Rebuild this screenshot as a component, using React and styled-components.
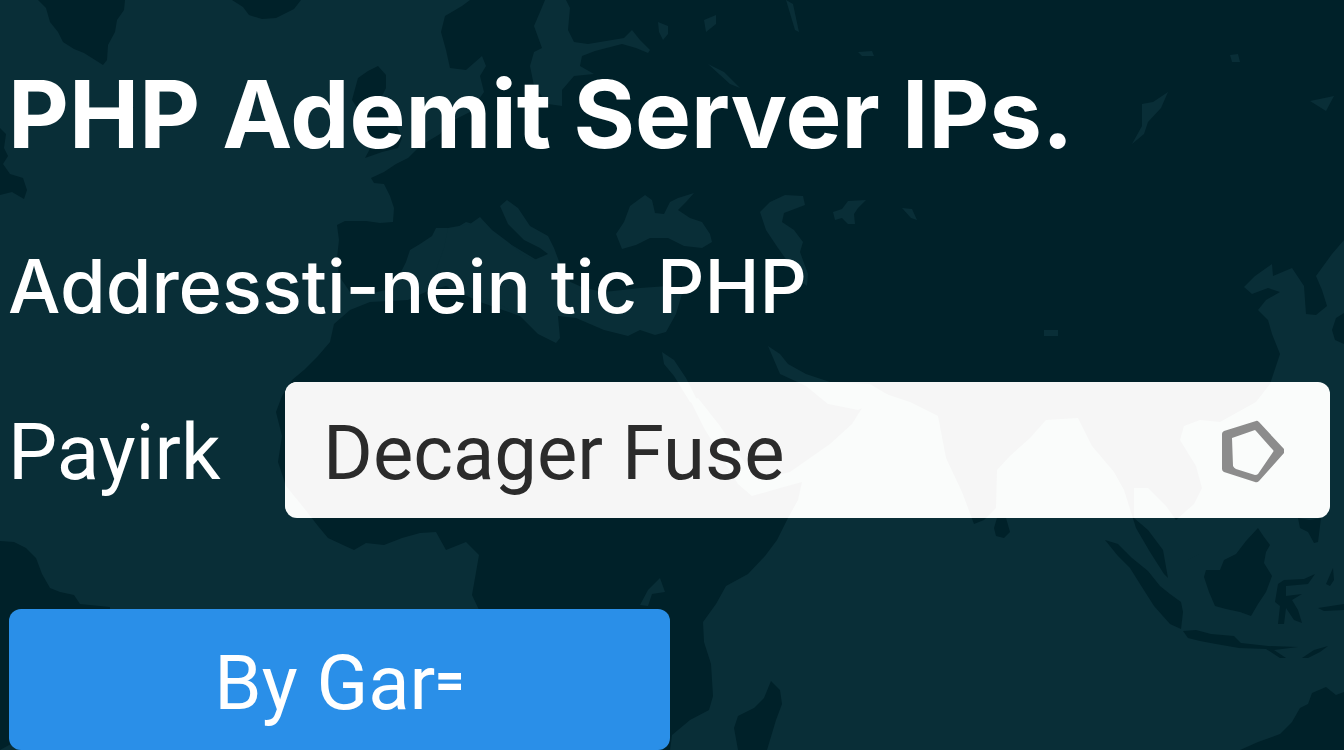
import React from "react";
import styled, { createGlobalStyle } from "styled-components";

const GlobalStyle = createGlobalStyle`
  * { box-sizing: border-box; }
  body { margin: 0; background: #092e37; }
`;

const Page = styled.main`
  position: relative;
  isolation: isolate;
  min-height: 100vh;
  overflow: hidden;
  padding: 60px 14px 0 8px;
  color: #fff;
  font-family: Roboto, "Liberation Sans", sans-serif;
`;

const MapBackdrop = styled.svg`
  position: absolute;
  inset: 0;
  z-index: -1;
  width: 100%;
  height: 100%;
`;

const Title = styled.h1`
  margin: 0 0 68px;
  font-family: Inter, sans-serif;
  font-size: 94px;
  font-weight: 700;
  line-height: 108px;
`;

const Subtitle = styled.h2`
  margin: 0 0 46px;
  font-family: Inter, sans-serif;
  font-size: 74px;
  font-weight: 450;
  line-height: 100px;
`;

const Form = styled.form`
  display: flex;
  flex-direction: column;
  gap: 91px;
`;

const Field = styled.div`
  display: flex;
  align-items: center;
`;

const Label = styled.label`
  flex: 0 0 277px;
  padding-top: 6px;
  font-size: 78px;
  font-weight: 450;
  line-height: 100px;
`;

const SelectBox = styled.div`
  position: relative;
  flex: 1;
  display: flex;
  overflow: hidden;
  border-radius: 12px;
  background: #fafcfb;
`;

const Select = styled.select`
  appearance: none;
  position: relative;
  width: 100%;
  height: 136px;
  padding: 6px 120px 0 38px;
  border: 0;
  border-radius: 12px;
  background: transparent;
  color: #2b2b2b;
  font: 450 76px "Roboto", "Liberation Sans", sans-serif;
`;

const FieldMap = styled.svg`
  position: absolute;
  inset: 0;
  width: 100%;
  height: 100%;
`;

const Pentagon = styled.svg`
  position: absolute;
  top: 50%;
  right: 46px;
  width: 64px;
  height: 64px;
  margin-top: -30px;
  pointer-events: none;
`;

const Submit = styled.button`
  width: 50%;
  height: 141px;
  margin-left: 1px;
  padding: 6px 0 0;
  border: 0;
  border-radius: 12px;
  background: #2a8fe8;
  color: #fff;
  font: 450 76px "Roboto", "Liberation Sans", sans-serif;
  cursor: pointer;
`;

const Mark = styled.span`
  font-size: 50px;
  font-weight: 900;
  line-height: 0;
  vertical-align: 12px;
`;

const land = [
  // Greenland, Iceland, Newfoundland
  "M38 0L46 8L50 22L58 32L63 42L74 49L84 53L92 58L103 65L107 60L108 45L115 32L117 20L124 10L125 0Z",
  "M232 0L243 7L249 15L262 19L276 18L294 9L301 0Z",
  "M0 128L6 134L4 148L8 156L3 164L10 174L23 178L27 190L24 199L12 192L0 195Z",
  // Britain and Ireland
  "M358 78L368 71L378 66L386 75L386 88L382 96L390 108L396 124L402 138L398 148L382 152L365 158L372 145L357 128L360 112L352 100Z",
  // Europe, Africa and Asia
  "M470 0L462 6L445 16L441 32L446 50L450 68L466 70L482 56L486 66L480 76L484 92L470 112L450 122L440 134L420 146L408 158L396 164L384 172L371 178L374 183L384 184L390 196L394 208L393 222L380 223L366 221L345 221L337 225L339 240L337 258L339 276L350 292L368 294L386 290L398 278L406 262L410 250L420 244L432 236L436 228L456 228L466 222L480 226L520 250L540 262L556 272L570 280L566 312L520 316L480 302L446 286L430 290L408 300L370 302L350 310L334 324L330 342L318 356L304 370L292 380L282 396L276 412L282 436L278 462L286 486L304 508L318 526L328 538L343 545L354 550L366 543L384 545L402 538L420 533L436 532L446 550L466 542L479 555L475 578L472 595L480 612L505 640L510 690L515 750L670 750L672 735L690 720L709 710L713 696L711 664L704 642L703 622L716 604L726 586L748 574L765 556L777 540L788 518L798 500L802 482L780 488L752 496L738 484L720 454L704 428L690 400L698 398L720 426L740 456L758 480L790 472L830 444L852 424L862 408L880 392L910 402L938 416L946 458L962 492L974 524L984 520L996 508L997 470L1010 456L1030 438L1046 420L1078 418L1092 446L1114 472L1124 490L1136 528L1150 552L1164 574L1168 578L1163 550L1148 530L1134 518L1134 488L1148 488L1166 506L1176 520L1194 504L1202 488L1196 466L1180 440L1184 426L1200 420L1220 422L1256 402L1270 384L1280 354L1272 334L1268 320L1258 310L1266 300L1280 292L1268 288L1252 294L1244 287L1255 276L1272 264L1273 276L1292 268L1304 286L1306 314L1316 315L1327 306L1322 290L1316 276L1332 254L1344 240L1344 0Z",
  // Japan, Taiwan and the Philippines
  "M1344 313L1336 318L1332 330L1335 340L1344 344Z",
  "M1298 518L1310 520L1321 518L1318 542L1314 543L1308 532L1300 528Z",
  // Madagascar and Sri Lanka
  "M771 681L780 690L782 704L776 720L770 740L767 750L738 750L734 728L738 716L754 708L764 698Z",
  "M997 518L1006 518L1010 532L1004 538L996 536L994 528Z",
  // Sumatra, Java and Borneo
  "M1105 540L1118 544L1132 558L1148 571L1160 586L1170 594L1181 602L1183 612L1181 629L1170 624L1154 606L1140 584L1130 568L1118 556Z",
  "M1183 631L1196 630L1211 634L1234 636L1241 643L1268 646L1298 647L1274 650L1286 658L1280 658L1266 649L1239 648L1216 644L1200 641L1188 638Z",
  "M1258 528L1264 537L1270 545L1266 552L1264 563L1272 576L1266 592L1258 604L1251 616L1240 612L1226 609L1215 606L1209 592L1204 577L1206 570L1220 570L1224 560L1236 554L1246 541Z",
  // Sulawesi and neighbouring islands
  "M1278 584L1284 580L1304 579L1315 574L1308 584L1286 586L1286 596L1302 594L1292 600L1298 610L1302 623L1294 620L1286 608L1284 624L1278 624L1280 606L1275 602Z",
  "M1326 584L1333 568L1334 580L1330 586Z",
  "M1318 608L1344 604L1344 610L1324 611Z",
  "M1302 658L1314 650L1328 646L1320 652L1308 658Z",
  "M1188 560L1200 554L1192 558Z",
  // Australia
  "M1240 750L1258 742L1280 734L1292 722L1300 708L1308 704L1312 693L1326 687L1336 695L1344 692L1344 750Z",
  // South America
  "M0 541L14 542L26 548L36 558L42 574L50 588L60 592L74 595L80 604L110 607L110 690L0 750Z",
];

const water = [
  // Baltic and the Gulf of Finland
  "M545 0L566 0L570 8L568 30L574 42L588 44L624 38L632 30L640 40L650 50L648 53L636 48L622 44L595 51L582 56L580 66L594 74L574 76L562 90L562 106L548 104L534 86L530 66L534 52L542 48L534 26L540 12Z",
  "M658 22L668 26L668 34L663 40L659 32Z",
  "M704 20L716 15L716 24L706 32Z",
  "M786 0L793 4L799 32L795 30Z",
  "M708 64L724 72L740 88L730 84Z",
  "M858 52L872 51L874 56L862 56Z",
  // Mediterranean
  "M448 228L470 224L480 217L492 230L508 242L522 254L534 260L548 254L540 248L524 240L508 224L500 206L507 200L518 208L530 226L548 236L554 248L566 280L584 288L604 292L640 288L668 286L682 294L676 314L666 332L655 335L640 330L628 336L604 330L576 318L558 316L560 338L556 343L538 334L520 316L492 300L452 292L436 270L444 248Z",
  // Black Sea and Azov
  "M616 234L624 222L630 206L645 195L652 200L655 213L664 214L670 202L678 198L694 193L686 202L678 210L690 218L702 222L710 234L712 242L702 248L684 246L668 238L650 238L636 245L622 249Z",
  // Caspian and Aral
  "M760 212L770 202L785 195L803 196L805 205L784 213L782 222L794 230L803 242L800 252L808 274L807 286L796 278L788 262L778 248L766 230Z",
  "M833 212L842 209L848 201L866 200L858 208L854 214L855 224L848 224L842 218L835 220Z",
  // Red Sea and Persian Gulf
  "M662 352L674 360L686 378L700 406L690 402L674 376L664 364Z",
  "M768 346L780 354L788 364L806 374L830 382L870 384L890 396L858 410L828 404L806 386L780 374Z",
  // Lakes
  "M1230 55L1238 54L1240 62L1232 62Z",
  "M1142 104L1153 102L1168 92L1161 108L1148 122L1144 134L1132 144L1142 126Z",
  "M1310 101L1334 96L1326 111Z",
  "M648 590L660 578L665 592L652 594L648 606L640 605Z",
  "M902 208L912 209L917 220L911 218Z",
  "M1044 330L1058 330L1058 336L1044 336Z",
];

function WorldShapes({ landFill, waterFill }) {
  return (
    <>
      <path d={land.join("")} fill={landFill} />
      <path d={water.join("")} fill={waterFill} />
    </>
  );
}

export default function App() {
  return (
    <>
      <GlobalStyle />
      <Page>
        <MapBackdrop
          viewBox="0 0 1344 750"
          preserveAspectRatio="xMinYMin slice"
          aria-hidden="true"
        >
          <WorldShapes landFill="#002129" waterFill="#092e37" />
        </MapBackdrop>
        <Title>PHP Ademit Server IPs.</Title>
        <Subtitle>Addressti-nein tic PHP</Subtitle>
        <Form onSubmit={(event) => event.preventDefault()}>
          <Field>
            <Label htmlFor="payirk">Payirk</Label>
            <SelectBox>
              <FieldMap
                viewBox="285 382 1045 136"
                preserveAspectRatio="xMinYMin slice"
                aria-hidden="true"
              >
                <WorldShapes landFill="#f6f6f6" waterFill="#fafcfb" />
              </FieldMap>
              <Select id="payirk" defaultValue="fuse">
                <option value="fuse">Decager Fuse</option>
              </Select>
              <Pentagon viewBox="0 0 64 64" aria-hidden="true">
                <path
                  fillRule="evenodd"
                  d="M36 1Q37 0 39 2L64 29Q66 31 64 33L39 61Q37 63 35 62L4 52Q2 51 2 49L2 14Q2 12 4 11ZM35 10L12 18L13 46Q14 48 16 49L35 55Q37 55 38 54L53 32Q54 31 53 30L36 11Z"
                  fill="#8c8c8c"
                />
              </Pentagon>
            </SelectBox>
          </Field>
          <Submit type="submit">
            By Gar<Mark>=</Mark>
          </Submit>
        </Form>
      </Page>
    </>
  );
}
